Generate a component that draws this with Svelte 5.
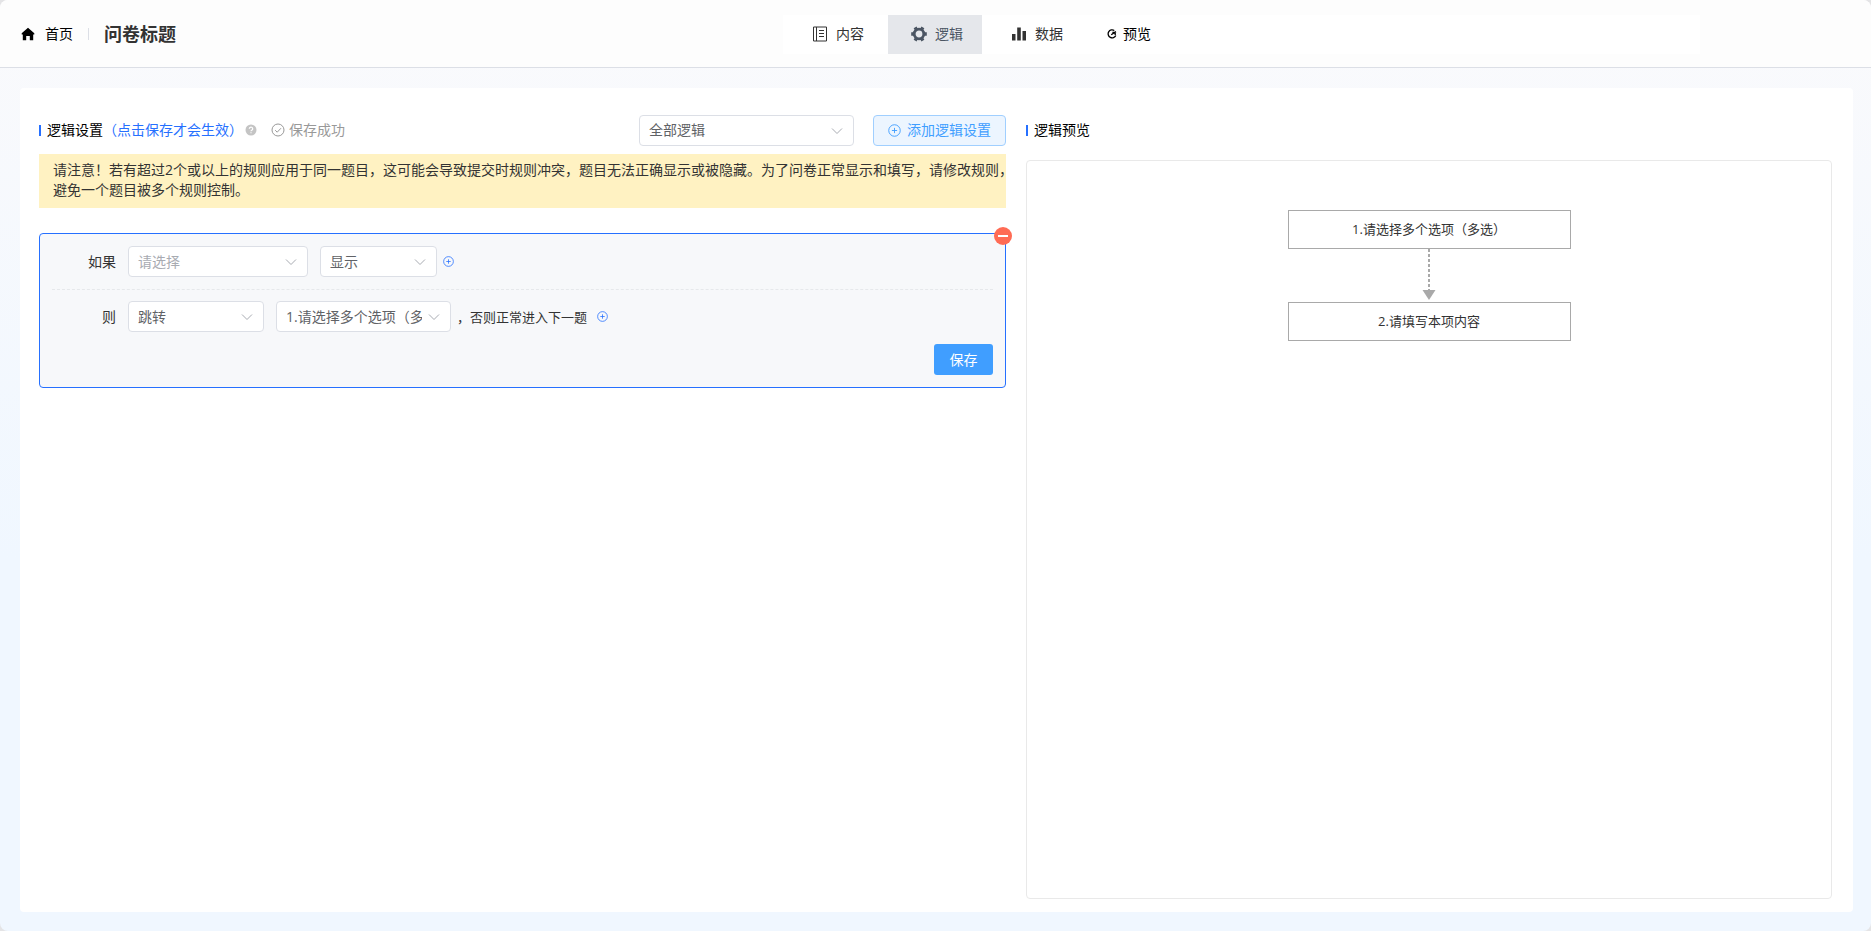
<script lang="ts">
	let scope = $state('all');
	let subject = $state('');
	let condition = $state('show');
	let action = $state('jump');
	let target = $state('q1');

	const questions = [
		{ id: 'q1', label: '1.请选择多个选项（多选）' },
		{ id: 'q2', label: '2.请填写本项内容' },
	];
</script>

{#snippet chevron()}
	<svg class="chevron" viewBox="0 0 12 12" aria-hidden="true"><path d="M1 3.5l5 5 5-5" /></svg>
{/snippet}

{#snippet circlePlus()}
	<svg viewBox="0 0 14 14" aria-hidden="true">
		<circle cx="7" cy="7" r="6.2" />
		<path d="M7 4.2v5.6M4.2 7h5.6" />
	</svg>
{/snippet}

<div class="page">
	<header class="topbar">
		<div class="crumbs">
			<a class="home" href="#home">
				<svg viewBox="0 0 14 14" aria-hidden="true">
					<path d="M7 .8L.7 6.3v1.3h1.1v5.6h3.4V9.1h3.6v4.1h3.4V7.6h1.1V6.3z" />
				</svg>
				首页
			</a>
			<span class="sep"></span>
			<h1>问卷标题</h1>
		</div>
		<nav class="tabs">
			<a href="#content">
				<svg class="ico" viewBox="0 0 16 16" aria-hidden="true">
					<path class="line" d="M1.5 1h13v14h-13zM4.5 1v14M7 4.5h5M7 7.5h5M7 10.5h5" />
				</svg>
				内容
			</a>
			<a href="#logic" class="active" aria-current="page">
				<svg class="ico" viewBox="0 0 16 16" aria-hidden="true">
					<circle class="ring" cx="8" cy="8" r="4.8" />
					<path
						class="teeth"
						d="M13 8h2.8M3 8H.2M10.600 12.500l1.300 2.200M5.400 12.500l-1.300 2.200M10.600 3.500l1.300-2.200M5.400 3.500L4.100 1.300"
					/>
				</svg>
				逻辑
			</a>
			<a href="#data">
				<svg class="ico" viewBox="0 0 16 16" aria-hidden="true">
					<path d="M1 8h3.5v6.5H1zM6.2 1.5h3.6v13H6.2zM11.500 5H15v9.500h-3.500z" />
				</svg>
				数据
			</a>
			<a href="#preview" class="preview">
				<svg class="ico-sm" viewBox="0 0 10 10" aria-hidden="true">
					<path class="arc" d="M7.300 1.500A4 4 0 1 0 8.800 6.500M4.200 5.800L9 2.600M5.400 3.500h2.800v2.400" />
				</svg>
				预览
			</a>
		</nav>
	</header>

	<main class="board">
		<section class="settings">
			<div class="head">
				<h2>逻辑设置<em>（点击保存才会生效）</em></h2>
				<svg class="help" viewBox="0 0 12 12" aria-hidden="true">
					<circle cx="6" cy="6" r="5.5" />
					<path d="M4.300 4.800a1.700 1.700 0 1 1 3 1.100C6.600 6.300 6 6.500 6 7.200M6 8.300v1" />
				</svg>
				<span class="saved">
					<svg viewBox="0 0 14 14" aria-hidden="true">
						<circle cx="7" cy="7" r="6" />
						<path d="M4.200 7.200l2 2 3.800-4" />
					</svg>
					保存成功
				</span>
				<div class="select scope">
					<select bind:value={scope} aria-label="全部逻辑">
						<option value="all">全部逻辑</option>
					</select>
					{@render chevron()}
				</div>
				<button type="button" class="add">{@render circlePlus()}添加逻辑设置</button>
			</div>

			<div class="notice">
				<p>请注意！若有超过2个或以上的规则应用于同一题目，这可能会导致提交时规则冲突，题目无法正确显示或被隐藏。为了问卷正常显示和填写，请修改规则，避免一个题目被多个规则控制。</p>
			</div>

			<div class="rule">
				<button type="button" class="remove" aria-label="删除"></button>
				<div class="row">
					<label for="subject">如果</label>
					<div class="select subject">
						<select id="subject" bind:value={subject} class:empty={!subject}>
							<option value="">请选择</option>
						</select>
						{@render chevron()}
					</div>
					<div class="select condition">
						<select bind:value={condition} aria-label="条件">
							<option value="show">显示</option>
						</select>
						{@render chevron()}
					</div>
					<button type="button" class="plus" aria-label="添加条件">{@render circlePlus()}</button>
				</div>
				<div class="row then">
					<label for="action">则</label>
					<div class="select action">
						<select id="action" bind:value={action}>
							<option value="jump">跳转</option>
						</select>
						{@render chevron()}
					</div>
					<div class="select target">
						<select bind:value={target} aria-label="跳转题目">
							{#each questions as q (q.id)}
								<option value={q.id}>{q.label}</option>
							{/each}
						</select>
						{@render chevron()}
					</div>
					<span class="otherwise">，否则正常进入下一题</span>
					<button type="button" class="plus" aria-label="添加动作">{@render circlePlus()}</button>
				</div>
				<div class="foot">
					<button type="button" class="save">保存</button>
				</div>
			</div>
		</section>

		<section class="flow">
			<div class="head"><h2>逻辑预览</h2></div>
			<div class="canvas">
				{#each questions as q, i (q.id)}
					{#if i > 0}
						<svg class="arrow" viewBox="0 0 14 53" aria-hidden="true">
							<path class="dash" d="M7 0v41" />
							<path class="tip" d="M.5 41h13L7 51z" />
						</svg>
					{/if}
					<div class="node">{q.label}</div>
				{/each}
			</div>
		</section>
	</main>
</div>

<style>
	:global(body) {
		background: #e4e4e6;
	}
	.page,
	.page button,
	.page select {
		font-family: 'Open Sans', 'Noto Sans CJK SC', sans-serif;
		font-size: 14px;
		line-height: 20px;
	}
	.page {
		display: flex;
		flex-direction: column;
		min-height: 100vh;
		box-sizing: border-box;
		border-radius: 8px;
		overflow: hidden;
		color: #333;
		background: linear-gradient(#fafafc, #f0f7ff 60%);
	}
	.page * {
		box-sizing: border-box;
	}
	svg {
		flex: none;
		fill: none;
		stroke: none;
	}
	a {
		color: inherit;
		text-decoration: none;
	}
	h1,
	h2,
	p {
		margin: 0;
	}
	button {
		cursor: pointer;
	}

	.topbar {
		display: grid;
		grid-template-columns: 783px 1fr;
		align-items: center;
		height: 68px;
		padding-top: 1px;
		background: #fdfdfd;
		border-bottom: 1px solid #dcdfe6;
	}
	.crumbs {
		display: flex;
		align-items: center;
		padding-left: 21px;
	}
	.home {
		display: flex;
		align-items: center;
		gap: 10px;
		color: #000;
	}
	.home svg {
		width: 14px;
		height: 14px;
		fill: #000;
	}
	.sep {
		width: 1px;
		height: 12px;
		margin: 0 15px;
		background: #dcdfe6;
	}
	h1 {
		font-size: 18px;
		line-height: 24px;
		font-weight: 700;
	}
	.tabs {
		display: flex;
		height: 39px;
		margin-right: 171px;
		background: #fff;
	}
	.tabs a {
		display: flex;
		align-items: center;
		gap: 8px;
		padding: 0 24px 0 29px;
	}
	.tabs a.active {
		padding: 0 19px 0 23px;
		background: #e5e7eb;
		color: #4b5563;
	}
	.tabs a.preview {
		gap: 6px;
		padding-left: 20px;
		color: #000;
	}
	.ico {
		width: 16px;
		height: 16px;
		fill: #333;
	}
	.ico .line {
		fill: none;
		stroke: #333;
	}
	.ring,
	.teeth {
		fill: none;
		stroke: #4b5563;
		stroke-width: 2.8;
	}
	.teeth {
		stroke-width: 3.4;
	}
	.ico-sm {
		width: 10px;
		height: 10px;
	}
	.arc {
		stroke: #000;
		stroke-width: 1.3;
	}

	.board {
		flex: 1;
		display: flex;
		gap: 20px;
		margin: 20px 18px 19px 20px;
		padding: 26px 21px 13px 19px;
		background: #fff;
		border-radius: 4px;
	}
	.settings {
		flex: 6 1 0;
		min-width: 0;
	}
	.flow {
		flex: 5 1 0;
		min-width: 0;
		display: flex;
		flex-direction: column;
	}
	.head {
		display: flex;
		align-items: center;
		height: 32px;
	}
	h2 {
		display: flex;
		align-items: center;
		font-size: 14px;
		font-weight: 400;
		color: #000;
	}
	h2::before {
		content: '';
		width: 2px;
		height: 11px;
		margin-right: 6px;
		background: #2670ff;
	}
	h2 em {
		font-style: normal;
		color: #2670ff;
	}
	.help {
		width: 12px;
		height: 12px;
		margin-left: 2px;
		fill: #c4c4c4;
	}
	.help path {
		fill: none;
		stroke: #fff;
		stroke-width: 1.2;
	}
	.saved {
		display: flex;
		align-items: center;
		gap: 4px;
		margin-left: 14px;
		color: #999;
	}
	.saved svg {
		width: 14px;
		height: 14px;
		stroke: #999;
	}

	.select {
		position: relative;
	}
	.select select {
		display: block;
		width: 100%;
		height: 31px;
		padding: 0 28px 0 9px;
		appearance: none;
		border: 1px solid #dcdfe6;
		border-radius: 4px;
		background: #fff;
		color: #606266;
	}
	.select select.empty {
		color: #a8abb2;
	}
	.chevron {
		position: absolute;
		top: 10px;
		right: 11px;
		width: 12px;
		height: 12px;
		stroke: #a8abb2;
		pointer-events: none;
	}
	.scope {
		width: 215px;
		margin-left: auto;
	}
	.add {
		display: flex;
		align-items: center;
		justify-content: center;
		gap: 6px;
		width: 133px;
		height: 31px;
		margin-left: 19px;
		padding: 0;
		border: 1px solid #a0cfff;
		border-radius: 4px;
		background: #ecf5ff;
		color: #409eff;
	}
	.add svg {
		width: 13px;
		height: 13px;
		stroke: #409eff;
	}

	.notice {
		margin-top: 8px;
		padding: 6px 0 8px 14px;
		background: #fff2c2;
	}
	.notice p {
		margin-right: -10px;
	}

	.rule {
		position: relative;
		margin-top: 25px;
		padding: 12px;
		border: 1px solid #2670ff;
		border-radius: 4px;
		background: #f7f8fa;
	}
	.remove {
		position: absolute;
		top: -7px;
		right: -7px;
		width: 18px;
		height: 18px;
		padding: 0;
		border: 0;
		border-radius: 50%;
		background: #ff6b54;
	}
	.remove::after {
		content: '';
		display: block;
		width: 10px;
		height: 2px;
		margin: 0 auto;
		background: #fff;
	}
	.row {
		display: flex;
		align-items: center;
	}
	.row.then {
		margin-top: 12px;
		padding-top: 11px;
		border-top: 1px dashed #e6e8eb;
	}
	.row label {
		width: 64px;
		margin-right: 12px;
		text-align: right;
	}
	.subject {
		width: 180px;
	}
	.condition {
		width: 117px;
	}
	.action {
		width: 136px;
	}
	.target {
		width: 175px;
	}
	.row .select + .select {
		margin-left: 12px;
	}
	.otherwise {
		margin: 0 4px 0 6px;
		font-size: 13px;
	}
	.plus {
		display: flex;
		margin-left: 6px;
		padding: 0;
		border: 0;
		background: none;
	}
	.plus svg {
		width: 11px;
		height: 11px;
		stroke: #2670ff;
	}
	.foot {
		display: flex;
		justify-content: flex-end;
		margin-top: 12px;
	}
	.save {
		width: 59px;
		height: 31px;
		padding: 0;
		border: 0;
		border-radius: 3px;
		background: #409eff;
		color: #fff;
	}

	.canvas {
		flex: 1;
		display: flex;
		flex-direction: column;
		align-items: center;
		margin-top: 14px;
		padding: 49px 20px;
		border: 1px solid #e9e9e9;
		border-radius: 4px;
	}
	.node {
		width: 283px;
		max-width: 100%;
		padding: 8px 0 9px;
		border: 1px solid #a9a9a9;
		font-size: 13px;
		text-align: center;
	}
	.arrow {
		width: 14px;
		height: 53px;
	}
	.dash {
		stroke: #a9a9a9;
		stroke-width: 2;
		stroke-dasharray: 3 2;
	}
	.tip {
		fill: #a9a9a9;
	}
</style>
